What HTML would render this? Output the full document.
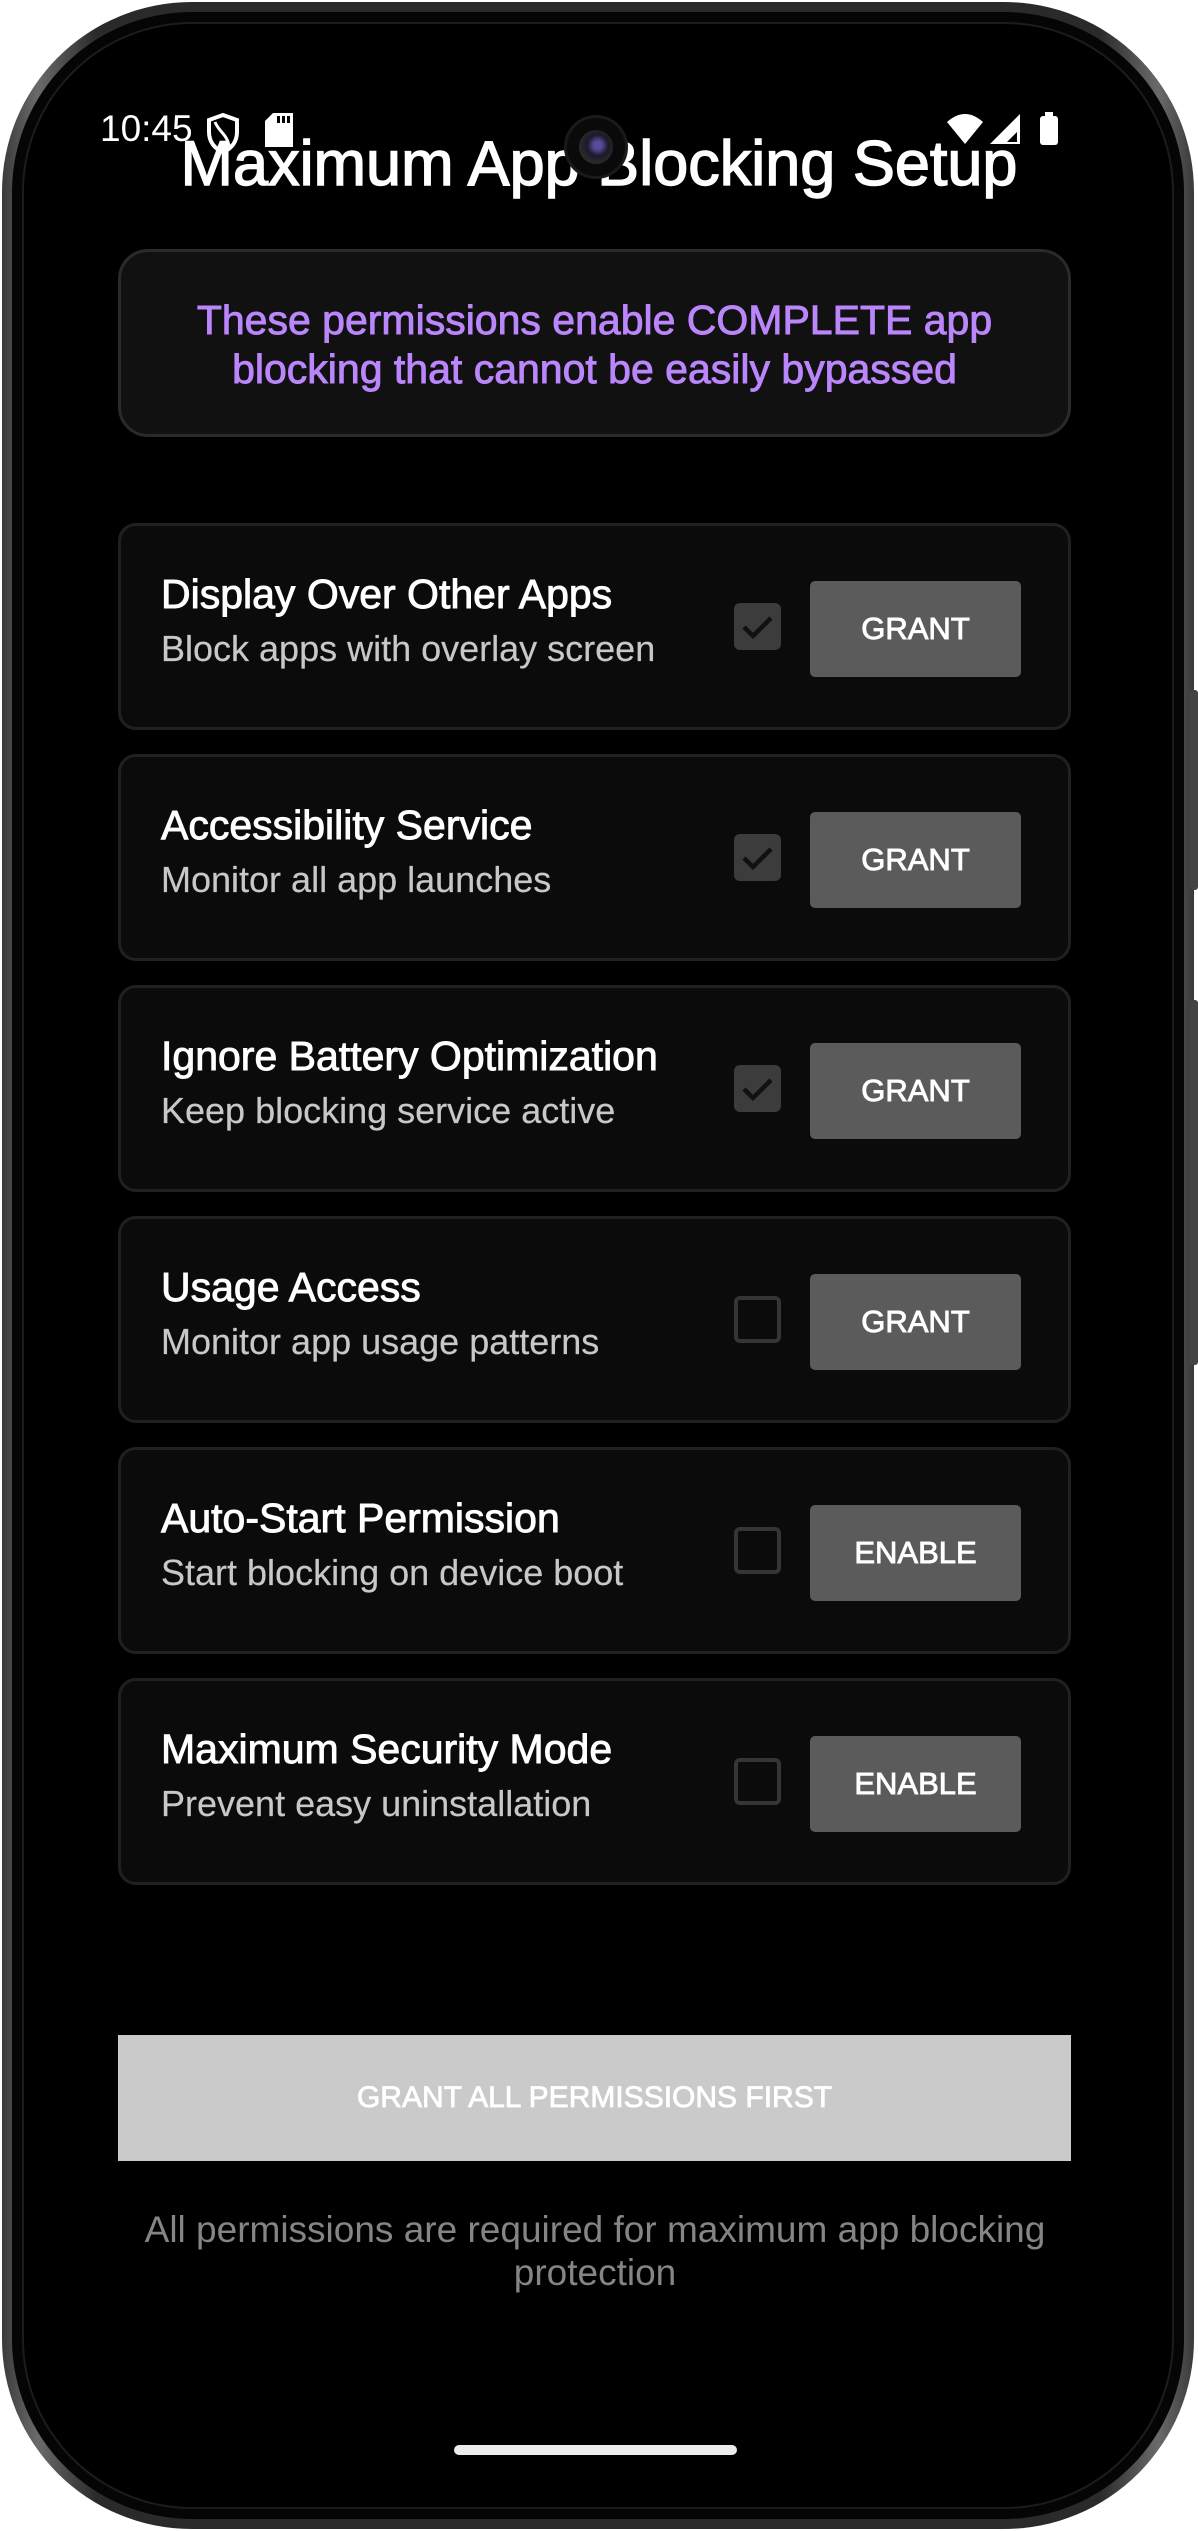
<!DOCTYPE html>
<html><head><meta charset="utf-8"><style>
*{margin:0;padding:0;box-sizing:border-box}
html,body{width:1198px;height:2531px;background:#fff;overflow:hidden;font-family:"Liberation Sans",sans-serif}
.abs{position:absolute}
.frame{left:2px;top:2px;width:1192px;height:2527px;border-radius:190px;background:linear-gradient(90deg,#3a3a3a,#6a6a6a 3%,#2a2a2a 8%,#2a2a2a 92%,#6a6a6a 97%,#3a3a3a);}
.bezel{left:12px;top:12px;width:1172px;height:2507px;border-radius:180px;background:#050505;}
.screen{left:22px;top:22px;width:1152px;height:2487px;border-radius:170px;background:#000;border:2px solid #1c1c1c}
.card{left:118px;width:953px;height:207px;background:#0b0b0b;border:3px solid #202020;border-radius:18px}
.t{position:absolute;left:40px;top:45px;font-size:41px;color:#fff;white-space:nowrap;-webkit-text-stroke:0.9px #fff}
.s{position:absolute;left:40px;top:102px;font-size:36px;color:#c8c8c8;white-space:nowrap;-webkit-text-stroke:0.2px #c8c8c8}
.cb{position:absolute;left:613px;top:77px;width:47px;height:47px;border-radius:6px}
.cb.on{background:#3c3c3c}
.cb.off{border:4px solid #353535}
.btn{position:absolute;left:689px;top:55px;width:211px;height:96px;background:#5b5b5b;border-radius:5px;color:#fff;font-size:31px;text-align:center;line-height:96px;-webkit-text-stroke:0.9px #fff}
</style></head><body>
<div class="abs frame"></div>
<div class="abs" style="left:1190px;top:690px;width:8px;height:200px;background:#444;border-radius:3px"></div>
<div class="abs" style="left:1190px;top:1000px;width:8px;height:365px;background:#444;border-radius:3px"></div>
<div class="abs bezel"></div>
<div class="abs screen"></div>

<div class="abs" style="left:100px;top:108px;font-size:37px;color:#fff;">10:45</div>
<svg class="abs" style="left:205px;top:112px" width="36" height="44" viewBox="0 0 36 44"><path d="M18 3 L32 8 V20 C32 30 26 37 18 40 C10 37 4 30 4 20 V8 Z" fill="none" stroke="#fff" stroke-width="4"/><path d="M10 10 C14 20 22 22 24 34" fill="none" stroke="#fff" stroke-width="3"/></svg>
<svg class="abs" style="left:265px;top:113px" width="28" height="34" viewBox="0 0 28 34"><path d="M8 0 H28 V34 H0 V8 Z" fill="#fff"/><rect x="12" y="3" width="3" height="7" fill="#000"/><rect x="17" y="3" width="3" height="7" fill="#000"/><rect x="22" y="3" width="3" height="7" fill="#000"/></svg>
<svg class="abs" style="left:945px;top:112px" width="120" height="34" viewBox="0 0 120 34"><path d="M2 10 Q20 -6 38 10 L20 32 Z" fill="#fff"/><path d="M45 32 L75 2 V32 Z" fill="#fff"/><path d="M62 30 L72 20 V30 Z" fill="#000"/><rect x="95" y="4" width="18" height="29" rx="3" fill="#fff"/><rect x="100" y="0" width="8" height="5" fill="#fff"/></svg>

<div class="abs" style="left:0;width:1198px;top:128px;text-align:center;font-size:63px;color:#fff;-webkit-text-stroke:1.4px #fff;white-space:nowrap">Maximum App Blocking Setup</div>
<div class="abs" style="left:564px;top:115px;width:64px;height:64px;border-radius:50%;background:#0a0a0a;border:3px solid #1a1a1a"></div>
<div class="abs" style="left:579px;top:130px;width:34px;height:34px;border-radius:50%;background:radial-gradient(circle at 55% 45%,#5a4a9a 0 15%,#1a1a2a 40%,#2b2b2b 70%,#111 100%)"></div>

<div class="abs" style="left:118px;top:249px;width:953px;height:188px;background:#111;border:3px solid #2a2a2a;border-radius:30px;color:#BB86FC;font-size:41px;text-align:center;line-height:49px;padding-top:44px;-webkit-text-stroke:0.9px #BB86FC;white-space:nowrap">These permissions enable COMPLETE app<br>blocking that cannot be easily bypassed</div>

<div class="abs card" style="top:523px"><div class="t">Display Over Other Apps</div><div class="s">Block apps with overlay screen</div><div class="cb on"><svg width="47" height="47"><path d="M10 24 L19 33 L37 15" fill="none" stroke="#111" stroke-width="4.5"/></svg></div><div class="btn">GRANT</div></div>
<div class="abs card" style="top:754px"><div class="t">Accessibility Service</div><div class="s">Monitor all app launches</div><div class="cb on"><svg width="47" height="47"><path d="M10 24 L19 33 L37 15" fill="none" stroke="#111" stroke-width="4.5"/></svg></div><div class="btn">GRANT</div></div>
<div class="abs card" style="top:985px"><div class="t">Ignore Battery Optimization</div><div class="s">Keep blocking service active</div><div class="cb on"><svg width="47" height="47"><path d="M10 24 L19 33 L37 15" fill="none" stroke="#111" stroke-width="4.5"/></svg></div><div class="btn">GRANT</div></div>
<div class="abs card" style="top:1216px"><div class="t">Usage Access</div><div class="s">Monitor app usage patterns</div><div class="cb off"></div><div class="btn">GRANT</div></div>
<div class="abs card" style="top:1447px"><div class="t">Auto-Start Permission</div><div class="s">Start blocking on device boot</div><div class="cb off"></div><div class="btn">ENABLE</div></div>
<div class="abs card" style="top:1678px"><div class="t">Maximum Security Mode</div><div class="s">Prevent easy uninstallation</div><div class="cb off"></div><div class="btn">ENABLE</div></div>

<div class="abs" style="left:118px;top:2035px;width:953px;height:126px;background:#cacaca;color:#fff;font-size:30px;text-align:center;line-height:126px;-webkit-text-stroke:0.8px #fff">GRANT ALL PERMISSIONS FIRST</div>
<div class="abs" style="left:100px;width:990px;top:2208px;text-align:center;font-size:37px;line-height:43px;color:#858585">All permissions are required for maximum app blocking<br>protection</div>
<div class="abs" style="left:454px;top:2445px;width:283px;height:10px;border-radius:5px;background:#ececec"></div>
</body></html>
